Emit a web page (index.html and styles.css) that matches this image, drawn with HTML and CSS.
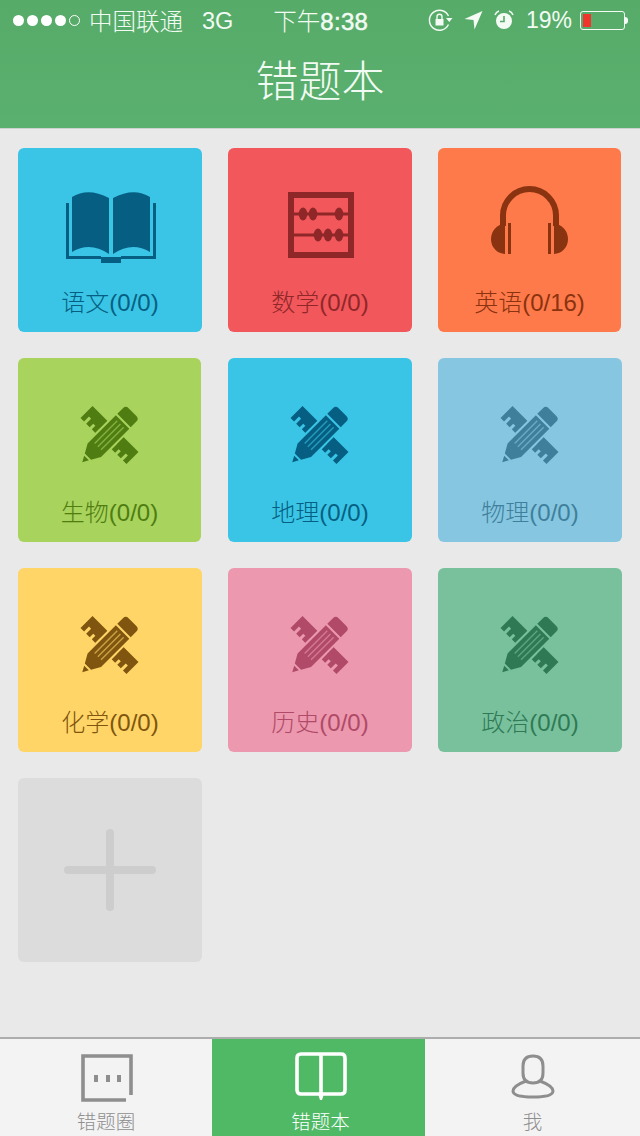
FILE: index.html
```html
<!DOCTYPE html>
<html lang="zh">
<head>
<meta charset="utf-8">
<title>错题本</title>
<link rel="stylesheet" href="styles.css">
</head>
<body>
<svg class="defs" width="0" height="0" aria-hidden="true">
  <symbol id="tools" viewBox="0 0 60 60">
    <g transform="rotate(45 29.5 30)">
      <path fill="currentColor" d="M-3 21.5H62V38.5H57V31.5H54V38.5H49V33.5H46V38.5H41V31.5H38V38.5H21V31.5H18V38.5H13V33.5H10V38.5H5V31.5H2V38.5H-3Z"/>
    </g>
    <g transform="rotate(-45 29.5 30)">
      <path class="halo" d="M-9 30 L8 20.5 H48 V39.5 H8 Z M50 20.5 H58 Q62 20.5 62 24.5 V35.5 Q62 39.5 58 39.5 H50 Z"/>
      <path fill="currentColor" d="M-9 30 L-3 26.7 V33.3 Z M-1 25.6 L8 20.5 H48 V39.5 H8 L-1 34.4 Z M50 20.5 H58 Q62 20.5 62 24.5 V35.5 Q62 39.5 58 39.5 H50 Z"/>
      <path class="stripes" d="M13 25.5H45M13 30H45M13 34.5H45"/>
    </g>
  </symbol>
</svg>
<div class="page">
  <header class="header">
    <div class="status">
      <div class="signal">
        <span class="dot"></span><span class="dot"></span><span class="dot"></span><span class="dot"></span><span class="dot dot-empty"></span>
      </div>
      <span class="carrier">中国联通</span>
      <span class="network">3G</span>
      <span class="clock">下午<b class="clock-digits">8:38</b></span>
      <div class="status-right">
        <svg class="st-lock" width="25" height="22" viewBox="0 0 25 22">
          <path class="st-line" d="M20.5 7A10 10 0 1 0 20.5 15.5"/>
          <path class="st-fill" d="M18 9H24.5L21.3 13Z"/>
          <path class="st-fill" d="M7.5 10H15.5V16.5H7.5Z"/>
          <path class="st-line" d="M9 10V7.8a2.5 2.5 0 0 1 5 0V10"/>
        </svg>
        <svg class="st-arrow" width="19" height="20" viewBox="0 0 19 20"><path class="st-fill" d="M18.5 1L10.5 19.5L9.5 10L0.5 9Z"/></svg>
        <svg class="st-alarm" width="20" height="20" viewBox="0 0 20 20">
          <circle class="st-fill" cx="10" cy="11" r="8"/>
          <path class="st-cut" d="M10 6V11.5H6"/>
          <path class="st-ear" d="M1 5Q2 2 5 1M19 5Q18 2 15 1"/>
        </svg>
        <span class="percent">19%</span>
        <div class="battery"><span class="battery-level"></span></div>
        <span class="battery-nub"></span>
      </div>
    </div>
    <h1 class="title">错题本</h1>
  </header>

  <main class="grid">
    <article class="card c-blue">
      <div class="icon-area">
        <svg class="ic-book" width="90" height="72" viewBox="0 0 90 72">
          <path fill="currentColor" d="M6 6Q22-4 43 7V63Q24 50 6 61Z"/>
          <path fill="currentColor" d="M84 6Q68-4 47 7V63Q66 50 84 61Z"/>
          <path fill="currentColor" d="M0 12H3V65H35V66H55V65H87V12H90V68H55V72H35V68H0Z"/>
        </svg>
      </div>
      <p class="label">语文(0/0)</p>
    </article>
    <article class="card c-red">
      <div class="icon-area">
        <svg class="ic-abacus" width="66" height="66" viewBox="0 0 66 66">
          <rect class="frame" x="3" y="3" width="60" height="60"/>
          <path class="rods" d="M5 22H61M5 43H61"/>
          <g fill="currentColor">
            <ellipse cx="15" cy="22" rx="4.3" ry="6.5"/>
            <ellipse cx="25" cy="22" rx="4.3" ry="6.5"/>
            <ellipse cx="51" cy="22" rx="4.3" ry="6.5"/>
            <ellipse cx="30" cy="43" rx="4.3" ry="6.5"/>
            <ellipse cx="40" cy="43" rx="4.3" ry="6.5"/>
            <ellipse cx="51" cy="43" rx="4.3" ry="6.5"/>
          </g>
        </svg>
      </div>
      <p class="label">数学(0/0)</p>
    </article>
    <article class="card c-orange card-narrow">
      <div class="icon-area">
        <svg class="ic-phones" width="78" height="68" viewBox="0 0 78 68">
          <path class="band" d="M12 40V29.5a26.5 26.5 0 0 1 53 0V40"/>
          <g fill="currentColor">
            <path d="M14 38A14 15 0 0 0 14 68Z"/>
            <path d="M63 38A14 15 0 0 1 63 68Z"/>
            <rect x="17" y="37" width="3" height="31"/>
            <rect x="57" y="37" width="3" height="31"/>
          </g>
        </svg>
      </div>
      <p class="label">英语(0/16)</p>
    </article>

    <article class="card c-green card-narrow">
      <div class="icon-area"><svg class="ic-tools" width="60" height="60"><use href="#tools"/></svg></div>
      <p class="label">生物(0/0)</p>
    </article>
    <article class="card c-blue">
      <div class="icon-area"><svg class="ic-tools" width="60" height="60"><use href="#tools"/></svg></div>
      <p class="label">地理(0/0)</p>
    </article>
    <article class="card c-sky">
      <div class="icon-area"><svg class="ic-tools" width="60" height="60"><use href="#tools"/></svg></div>
      <p class="label">物理(0/0)</p>
    </article>

    <article class="card c-yellow">
      <div class="icon-area"><svg class="ic-tools" width="60" height="60"><use href="#tools"/></svg></div>
      <p class="label">化学(0/0)</p>
    </article>
    <article class="card c-pink">
      <div class="icon-area"><svg class="ic-tools" width="60" height="60"><use href="#tools"/></svg></div>
      <p class="label">历史(0/0)</p>
    </article>
    <article class="card c-teal">
      <div class="icon-area"><svg class="ic-tools" width="60" height="60"><use href="#tools"/></svg></div>
      <p class="label">政治(0/0)</p>
    </article>

    <article class="card c-add">
      <svg class="ic-plus" width="92" height="82" viewBox="0 0 92 82">
        <path d="M46 4V78M4 41H88"/>
      </svg>
    </article>
  </main>

  <nav class="tabs">
    <div class="tab">
      <svg class="tab-icon icon-chat" width="52" height="48" viewBox="0 0 52 48">
        <path class="tab-line" d="M50 41V2H2V46H45"/>
        <path class="tab-dots" d="M13 24.5H17M25 24.5H29M36 24.5H40"/>
      </svg>
      <span class="tab-label">错题圈</span>
    </div>
    <div class="tab tab-active">
      <svg class="tab-icon icon-up" width="52" height="50" viewBox="0 0 52 50">
        <path class="tab-line" d="M6 2H46Q50 2 50 6V38Q50 42 46 42H6Q2 42 2 38V6Q2 2 6 2ZM26 2V42"/>
        <path class="tab-stem" d="M23 42H29L27 48H25Z"/>
      </svg>
      <span class="tab-label">错题本</span>
    </div>
    <div class="tab">
      <svg class="tab-icon" width="44" height="46" viewBox="0 0 44 46">
        <path class="tab-thin" d="M12 12Q12 2 22 2T32 12V19Q32 29 22 29T12 19Z"/>
        <path class="tab-thin" d="M15 27Q2 32 2 37Q2 43 22 43T42 37Q42 32 29 27"/>
      </svg>
      <span class="tab-label">我</span>
    </div>
  </nav>
</div>
</body>
</html>
```

FILE: styles.css
```css
* {
  box-sizing: border-box;
}

html,
body {
  margin: 0;
  padding: 0;
}

body {
  background: #e9e9e9;
  font-family: "Liberation Sans", "Noto Sans CJK SC", sans-serif;
}

.defs {
  display: block;
  height: 0;
}

.page {
  width: 640px;
  height: 1136px;
  display: flex;
  flex-direction: column;
  overflow: hidden;
}

/* Header and status bar */
.header {
  height: 129px;
  flex: none;
  background: linear-gradient(#57ab69, #5ab06f);
  border-bottom: 1px solid #cfd3cf;
  color: #f2fbf3;
}

.status {
  height: 40px;
  display: flex;
  align-items: center;
  padding: 0 12px 0 13px;
  font-size: 24px;
  font-weight: 300;
}

.signal {
  display: flex;
  gap: 3px;
  margin-right: 9px;
}

.dot {
  width: 11px;
  height: 11px;
  border-radius: 50%;
  background: #fff;
}

.dot-empty {
  background: none;
  border: 1px solid #fff;
}

.carrier {
  width: 94px;
  font-size: 23.5px;
  white-space: nowrap;
}

.network {
  margin-left: 19px;
  font-size: 23.5px;
  line-height: 32px;
  padding-top: 2px;
}

.clock {
  margin-left: 40px;
  font-size: 23.5px;
  white-space: nowrap;
}

.clock-digits {
  font-size: 24px;
  font-weight: 400;
  letter-spacing: 0.3px;
  -webkit-text-stroke: 0.5px #f2fbf3;
}

.status-right {
  margin-left: auto;
  display: flex;
  align-items: center;
}

.st-fill {
  fill: #f4fbf5;
}

.st-line {
  fill: none;
  stroke: #f4fbf5;
  stroke-width: 1.4;
}

.st-cut {
  fill: none;
  stroke: #57ab69;
  stroke-width: 1.6;
}

.st-ear {
  fill: none;
  stroke: #f4fbf5;
  stroke-width: 1.5;
}

.st-arrow {
  margin-left: 11px;
}

.st-alarm {
  margin-left: 11px;
}

.percent {
  margin-left: 12px;
  width: 46px;
  font-size: 23px;
  white-space: nowrap;
}

.battery {
  margin-left: 8px;
  width: 45px;
  height: 19px;
  padding: 2px;
  border: 1px solid #f4fbf5;
  border-radius: 3px;
}

.battery-level {
  display: block;
  width: 8px;
  height: 13px;
  background: #f0352c;
}

.battery-nub {
  width: 3px;
  height: 7px;
  background: #f4fbf5;
  border-radius: 0 3px 3px 0;
}

.title {
  margin: 15px 0 0;
  font-size: 43px;
  line-height: 54px;
  font-weight: 300;
  text-align: center;
}

/* Subject grid */
.grid {
  flex: 1;
  display: grid;
  grid-template-columns: repeat(3, 184px);
  grid-auto-rows: 184px;
  gap: 26px;
  padding: 19px 18px 0;
  align-content: start;
}

.card {
  border-radius: 6px;
  display: flex;
  flex-direction: column;
  align-items: center;
}

.card-narrow {
  width: 183px;
}

.icon-area {
  height: 139px;
  width: 100%;
  display: flex;
  justify-content: center;
  align-items: flex-start;
}

.ic-book {
  margin: 43px 0 0 2px;
}

.ic-abacus {
  margin: 44px 0 0 2px;
}

.ic-phones {
  margin-top: 38px;
}

.ic-tools {
  margin-top: 47px;
}

.label {
  margin: 0;
  height: 32px;
  line-height: 32px;
  font-size: 24px;
  font-weight: 300;
  white-space: nowrap;
}

.frame {
  fill: none;
  stroke: currentColor;
  stroke-width: 6;
}

.rods {
  fill: none;
  stroke: currentColor;
  stroke-width: 3;
}

.band {
  fill: none;
  stroke: currentColor;
  stroke-width: 6;
}

.halo {
  fill: var(--card);
  stroke: var(--card);
  stroke-width: 4;
}

.stripes {
  fill: none;
  stroke: var(--card);
  stroke-width: 1.4;
  opacity: 0.6;
}

.c-blue {
  --card: #3ac5e6;
  background: #3ac5e6;
  color: #065f82;
}

.c-red {
  --card: #f2575b;
  background: #f2575b;
  color: #8f2729;
}

.c-orange {
  --card: #ff7a4a;
  background: #ff7a4a;
  color: #8a3310;
}

.c-green {
  --card: #a8d35c;
  background: #a8d35c;
  color: #4f7d12;
}

.c-sky {
  --card: #86c6e0;
  background: #86c6e0;
  color: #3f7f9c;
}

.c-yellow {
  --card: #fed566;
  background: #fed566;
  color: #7f5510;
}

.c-pink {
  --card: #ec98ae;
  background: #ec98ae;
  color: #b04a68;
}

.c-teal {
  --card: #79c19d;
  background: #79c19d;
  color: #2f7a55;
}

.c-add {
  background: #dcdcdc;
  justify-content: center;
}

.ic-plus path {
  fill: none;
  stroke: #cdcdcd;
  stroke-width: 8;
  stroke-linecap: round;
}

/* Tab bar */
.tabs {
  flex: none;
  height: 99px;
  display: grid;
  grid-template-columns: 212px 213px 1fr;
  background: #f4f3f4;
  border-top: 2px solid #adadad;
  color: #8e8e8e;
}

.tab {
  display: flex;
  flex-direction: column;
  align-items: center;
  padding-top: 15px;
}

.tab-active {
  background: #4fb966;
  color: #fff;
  padding-left: 4px;
}

.icon-up {
  margin-top: -2px;
}

.icon-chat {
  margin-left: 2px;
}

.tab-icon {
  display: block;
  flex: none;
}

.tab-line {
  fill: none;
  stroke: currentColor;
  stroke-width: 3.6;
}

.tab-stem {
  fill: currentColor;
}

.tab-thin {
  fill: none;
  stroke: currentColor;
  stroke-width: 3;
}

.tab-dots {
  fill: none;
  stroke: currentColor;
  stroke-width: 7;
}

.tab-label {
  margin-top: auto;
  margin-bottom: 1px;
  font-size: 19.5px;
  line-height: 26px;
  font-weight: 300;
  white-space: nowrap;
}
```
